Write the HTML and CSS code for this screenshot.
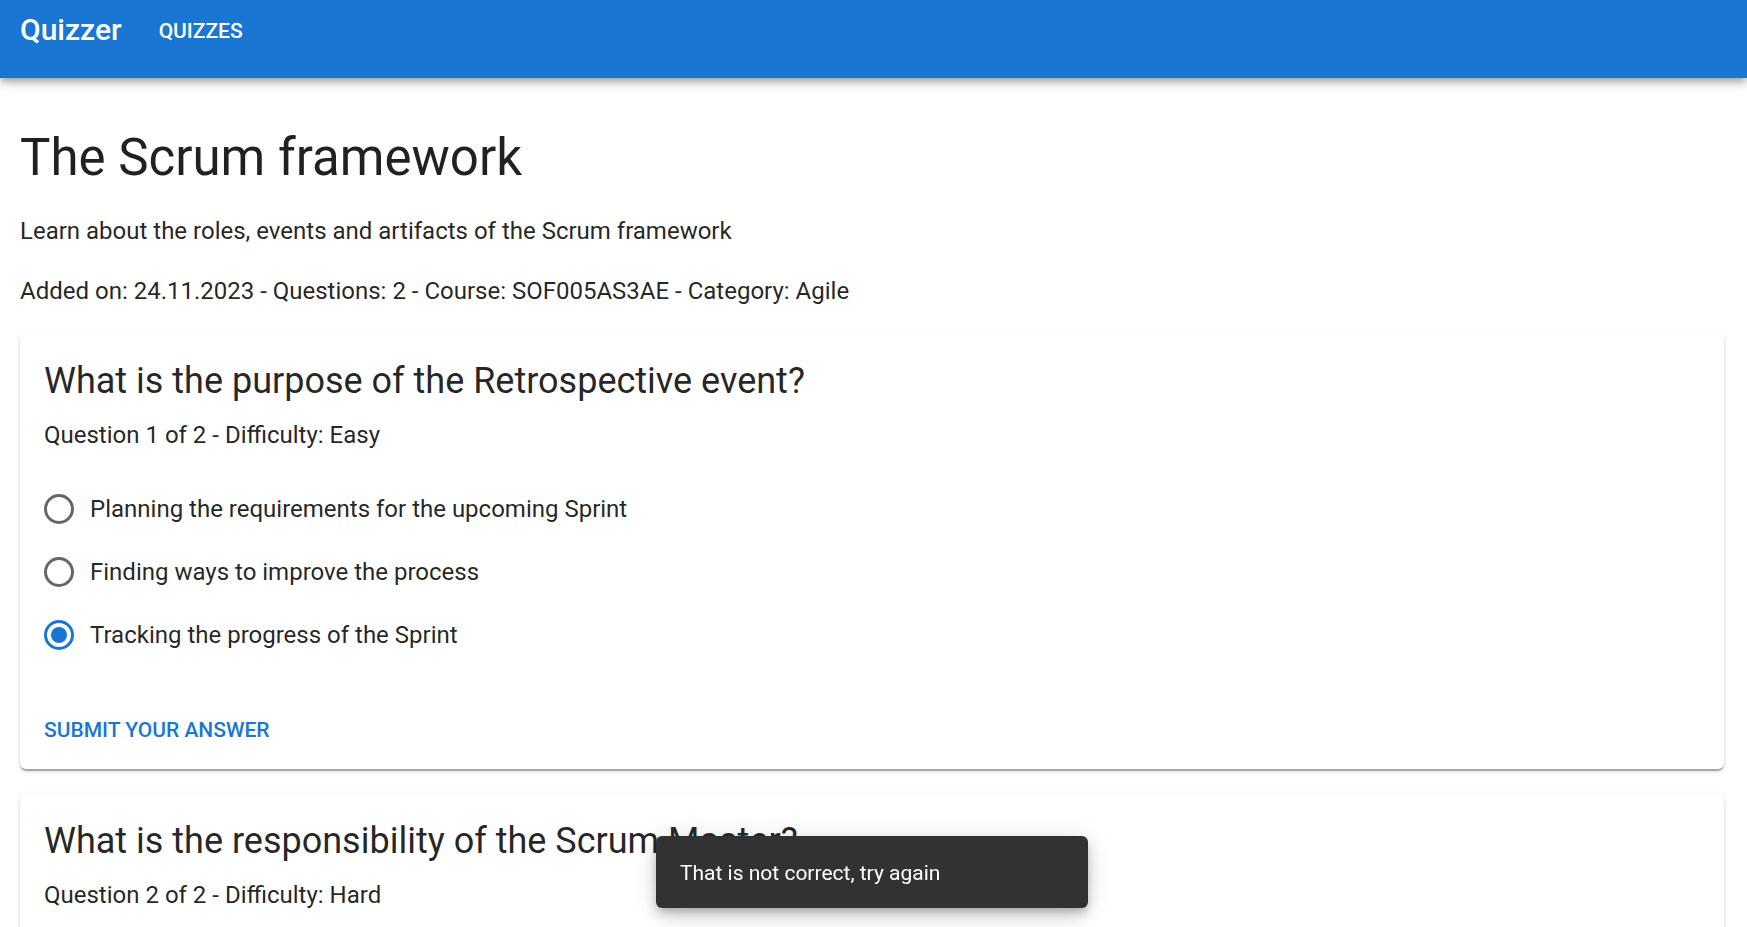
FILE: index.html
```html
<!DOCTYPE html>
<html lang="en">
<head>
<meta charset="utf-8">
<meta name="viewport" content="width=device-width, initial-scale=1">
<title>Quizzer</title>
<link rel="stylesheet" href="styles.css">
</head>
<body>
<header class="app-bar">
  <span class="brand">Quizzer</span>
  <nav><a class="nav-link" href="#quizzes">Quizzes</a></nav>
</header>
<main class="page">
  <h1 class="title">The Scrum framework</h1>
  <p class="text">Learn about the roles, events and artifacts of the Scrum framework</p>
  <p class="text">Added on: 24.11.2023 - Questions: 2 - Course: SOF005AS3AE - Category: Agile</p>
  <form class="card">
    <div class="card-content">
      <h2 class="question">What is the purpose of the Retrospective event?</h2>
      <p class="text">Question 1 of 2 - Difficulty: Easy</p>
      <div class="options" role="radiogroup" aria-label="Answer options">
        <label class="option"><input class="radio" type="radio" name="q1" value="1">Planning the requirements for the upcoming Sprint</label>
        <label class="option"><input class="radio" type="radio" name="q1" value="2">Finding ways to improve the process</label>
        <label class="option"><input class="radio" type="radio" name="q1" value="3" checked>Tracking the progress of the Sprint</label>
      </div>
    </div>
    <div class="card-actions"><button class="button" type="button">Submit your answer</button></div>
  </form>
  <section class="card">
    <div class="card-content">
      <h2 class="question">What is the responsibility of the Scrum Master?</h2>
      <p class="text">Question 2 of 2 - Difficulty: Hard</p>
    </div>
  </section>
</main>
<div class="snackbar-area">
  <div class="snackbar" role="alert">That is not correct, try again</div>
</div>
</body>
</html>
```
FILE: styles.css
```css
* { box-sizing: border-box; }
html { overflow: hidden; }
body {
  margin: 0;
  background: #fff;
  color: rgba(0, 0, 0, 0.87);
  font-family: Roboto, "Liberation Sans", sans-serif;
  font-size: 24px;
  line-height: 36px;
}
h1, h2, p { margin: 0; font-weight: 400; }
.app-bar {
  display: flex;
  align-items: center;
  gap: 37px;
  padding: 6px 20px 24px;
  background: #1976d2;
  color: #fff;
  box-shadow: 0 3px 6px -1px rgba(0, 0, 0, 0.2), 0 6px 8px rgba(0, 0, 0, 0.14), 0 2px 15px rgba(0, 0, 0, 0.12);
}
.brand { font-size: 30px; font-weight: 500; line-height: 48px; }
.nav-link {
  color: inherit;
  font-size: 21px;
  font-weight: 500;
  text-decoration: none;
  text-transform: uppercase;
}
.page {
  display: flex;
  flex-direction: column;
  gap: 24px;
  padding: 48px 23px 24px 20px;
}
.title { font-size: 51px; line-height: 63px; }
.card {
  border-radius: 6px;
  background: #fff;
  box-shadow: 0 3px 1px -1px rgba(0, 0, 0, 0.2), 0 2px 2px rgba(0, 0, 0, 0.14), 0 2px 5px rgba(0, 0, 0, 0.12);
}
.card-content { padding: 24px; }
.question { margin-bottom: 12px; font-size: 36px; line-height: 48px; }
.options { display: flex; flex-direction: column; margin-top: 24px; }
.option {
  display: flex;
  align-items: center;
  align-self: flex-start;
  gap: 16px;
  height: 63px;
  cursor: pointer;
}
.radio {
  appearance: none;
  display: grid;
  place-items: center;
  width: 30px;
  height: 30px;
  margin: 0;
  border: 3px solid rgba(0, 0, 0, 0.6);
  border-radius: 50%;
}
.radio:checked { border-color: #1976d2; }
.radio:checked::before {
  content: "";
  width: 16px;
  height: 16px;
  border-radius: 50%;
  background: #1976d2;
}
.card-actions { display: flex; padding: 12px; }
.button {
  padding: 10px 12px 8px;
  border: 0;
  border-radius: 6px;
  background: none;
  color: #1976d2;
  font: 500 21px/37px Roboto, "Liberation Sans", sans-serif;
  text-transform: uppercase;
  cursor: pointer;
}
.snackbar-area {
  position: fixed;
  right: 23px;
  bottom: 19px;
  left: 20px;
  display: flex;
  justify-content: center;
}
.snackbar {
  min-width: 432px;
  padding: 22px 24px 20px;
  border-radius: 6px;
  background: #323232;
  color: #fff;
  font-size: 21px;
  line-height: 30px;
  box-shadow: 0 5px 8px -2px rgba(0, 0, 0, 0.2), 0 9px 15px rgba(0, 0, 0, 0.14), 0 2px 27px rgba(0, 0, 0, 0.12);
}
```
